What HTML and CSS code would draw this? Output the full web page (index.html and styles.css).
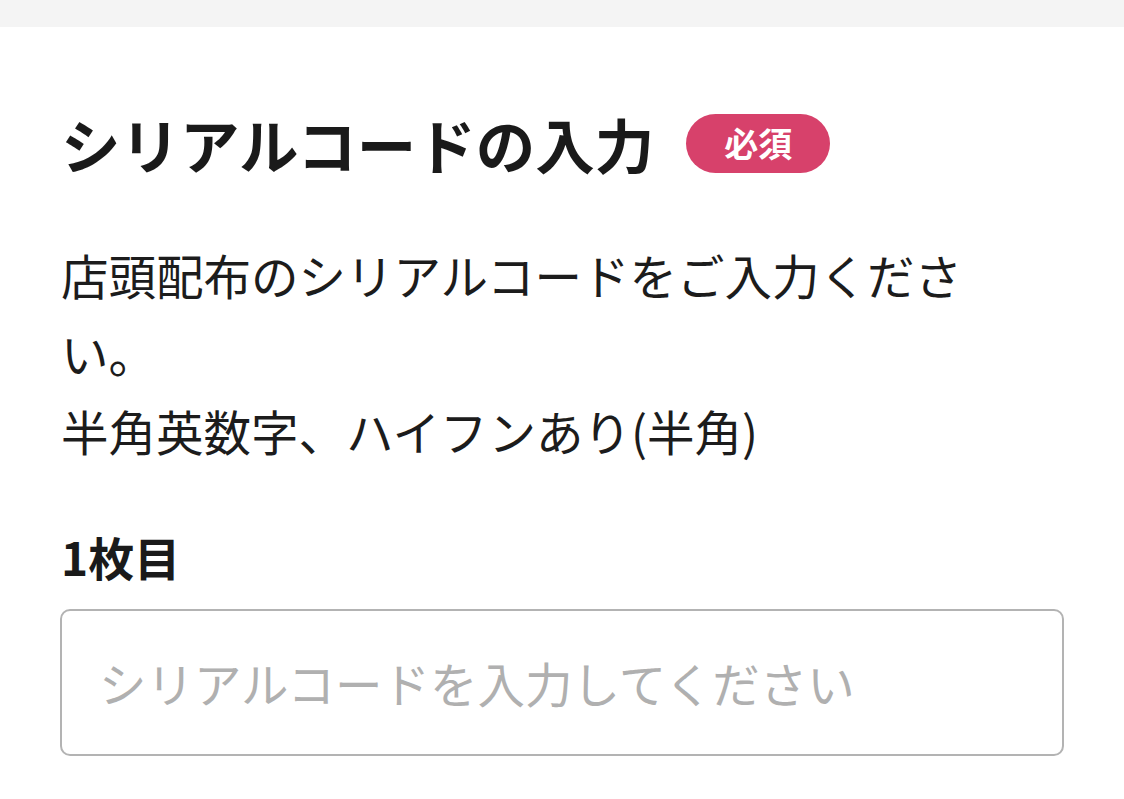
FILE: index.html
```html
<!DOCTYPE html>
<html lang="ja">
<head>
<meta charset="utf-8">
<title>シリアルコードの入力</title>
<link rel="stylesheet" href="styles.css">
</head>
<body>
<div class="topbar"></div>
<main class="content">
  <div class="heading">
    <h1 class="title">シリアルコードの入力</h1>
    <span class="badge">必須</span>
  </div>
  <p class="desc">店頭配布のシリアルコードをご入力ください。<br>半角英数字、ハイフンあり(半角)</p>
  <label class="label" for="code1">1枚目</label>
  <input class="input" id="code1" type="text" placeholder="シリアルコードを入力してください">
</main>
</body>
</html>
```

FILE: styles.css
```css
html, body {
  margin: 0;
  padding: 0;
  background: #ffffff;
}
body {
  font-family: "Noto Sans CJK JP", "Noto Sans", sans-serif;
  color: #1c1c1c;
}
.topbar {
  height: 27px;
  background: #f4f4f4;
}
.content {
  padding: 75px 60px 0 61px;
  display: flex;
  flex-direction: column;
  align-items: flex-start;
}
.heading {
  display: flex;
  align-items: center;
  gap: 32px;
}
.title {
  margin: 0;
  font-size: 59.5px;
  font-weight: 700;
  line-height: 82px;
  color: #1a1a1a;
}
.badge {
  display: flex;
  align-items: center;
  justify-content: center;
  width: 144px;
  height: 59px;
  border-radius: 30px;
  background: #d7416b;
  color: #ffffff;
  font-size: 34px;
  font-weight: 700;
  line-height: 1;
}
.desc {
  margin: 52px 0 0 0;
  max-width: 930px;
  font-size: 47.5px;
  line-height: 78px;
  color: #1c1c1c;
}
.label {
  margin-top: 55px;
  font-size: 46px;
  font-weight: 700;
  line-height: 62px;
  color: #1a1a1a;
}
.input {
  box-sizing: border-box;
  margin-top: 22px;
  margin-left: -1px;
  width: 1004px;
  height: 147px;
  padding: 0 37px;
  border: 2px solid #b3b3b3;
  border-radius: 10px;
  font-family: "Noto Sans CJK JP", "Noto Sans", sans-serif;
  font-size: 47.5px;
  color: #1c1c1c;
  background: #ffffff;
  outline: none;
}
.input::placeholder {
  color: #b0b0b0;
}
```
